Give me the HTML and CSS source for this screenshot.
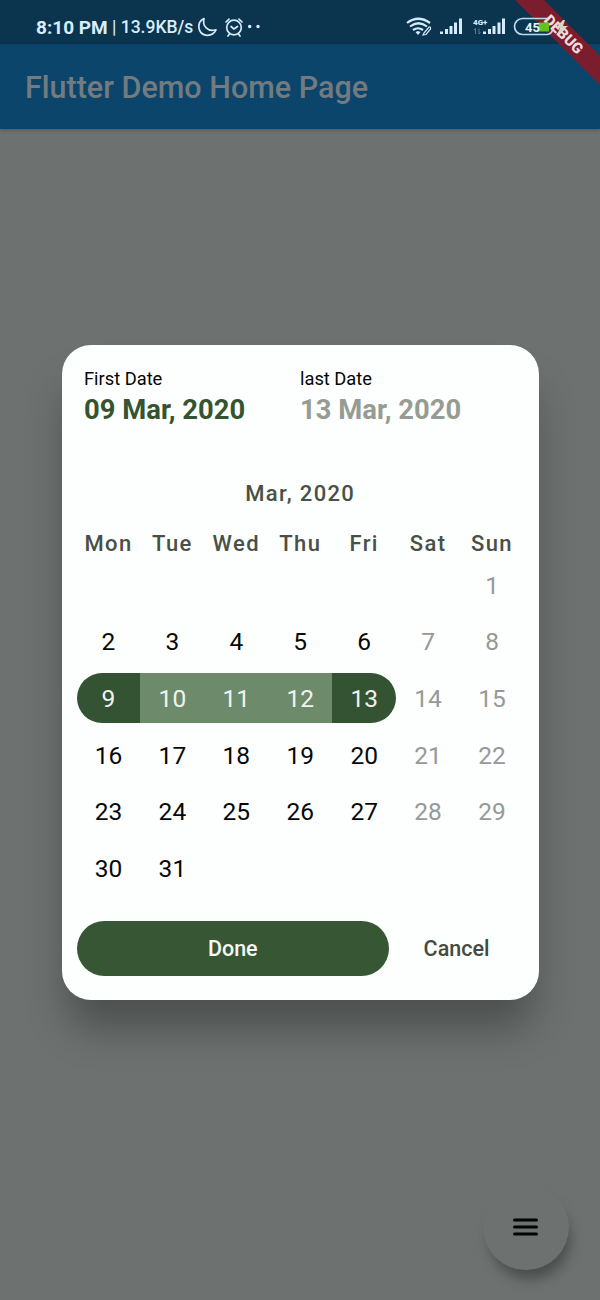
FILE: index.html
```html
<!DOCTYPE html>
<html lang="en">
<head>
<meta charset="utf-8">
<title>Flutter Demo Home Page</title>
<link rel="stylesheet" href="styles.css">
</head>
<body>
<div class="screen">
  <svg class="debug-banner" width="100" height="100" viewBox="0 0 100 100">
    <path d="M15 0H44L100 56V85Z" fill="#7b1d2d"/>
    <text class="debug-text" transform="translate(63.5 34.5) rotate(45)" text-anchor="middle" y="5">DEBUG</text>
  </svg>
  <header class="status-bar">
    <span class="clock">8:10 PM</span><span class="speed">| 13.9KB/s</span>
    <svg class="status-icons" width="70" height="24" viewBox="196 15 70 24" fill="none" stroke="#d5eafa" stroke-width="1.700" stroke-linecap="round" stroke-linejoin="round">
      <path d="M204 18.500C196.500 22 197 34.500 207 35.300C211.500 35.500 215 32.800 216 29.700C208 32.500 202 26 204 18.500Z"/>
      <circle cx="234" cy="27.500" r="7.300"/>
      <path d="M226 22L229 19.200M242 22L239 19.200M231 26.500L234 29L237.500 26.500M229.500 34L228 36M238.500 34L240 36"/>
      <circle cx="249.700" cy="26.500" r=".9" fill="#d5eafa"/><circle cx="258" cy="26.500" r=".9" fill="#d5eafa"/>
    </svg>
    <svg class="device-icons" width="170" height="28" viewBox="402 13 170 28" fill="none" stroke="#d5eafa" stroke-width="2.200">
      <path d="M407 23Q418 14.500 430 23M410 26.500Q418.500 20 427 26.500M413 30Q418 26.500 423 30"/>
      <path d="M415.500 32L418 35L420.500 32L418 31Z" fill="#d5eafa" stroke="none"/>
      <path d="M424 33L429 27Q431 26.500 430.500 29L426 34.500L423 35Z" stroke-width="1.200"/>
      <g fill="#d5eafa" stroke="none">
        <path d="M440 31.500h3V34h-3zM445 29h3v5h-3zM449.500 26h3v8h-3zM454 22.500h3V34h-3zM459 18.500h3V34h-3z"/>
        <path d="M483 31.500h3V34h-3zM488 29h3v5h-3zM492.500 26h3v8h-3zM497.500 22.500h3V34h-3zM502 18.500h3V34h-3z"/>
        <text class="net" x="473" y="24.500">4G+</text>
      </g>
      <path d="M475.500 28.500V34M474 30L475.500 28.500M479 28.500V34M479 34L480.500 32.500" stroke-width=".8" stroke="#6d91ad"/>
      <path d="M539 22.500H549V31.500H538Z" fill="#5fc41c" stroke="none"/>
      <path d="M548 18.500H522.500A8 8 0 0 0 522.500 34.500H547Q552 34 552.500 29" stroke="#bddaed" stroke-width="1.700"/>
      <text class="battery" x="525" y="31.500" fill="#e7f4fb" stroke="none">45</text>
      <path d="M563 20L555.500 28H560L557 35L568 26H563L565 20Z" fill="#d7d7c9" stroke="none"/>
    </svg>
  </header>
  <div class="app-bar"><h1 class="app-title">Flutter Demo Home Page</h1></div>
  <main class="page">
    <section class="dialog">
      <div class="dates">
        <div class="date"><div class="label">First Date</div><div class="value">09 Mar, 2020</div></div>
        <div class="date"><div class="label">last Date</div><div class="value value-muted">13 Mar, 2020</div></div>
      </div>
      <div class="month">Mar, 2020</div>
      <div class="weekdays"><span>Mon</span><span>Tue</span><span>Wed</span><span>Thu</span><span>Fri</span><span>Sat</span><span>Sun</span></div>
      <div class="days">
        <span class="day off first">1</span>
        <span class="day">2</span><span class="day">3</span><span class="day">4</span><span class="day">5</span><span class="day">6</span><span class="day off">7</span><span class="day off">8</span>
        <span class="day edge start">9</span><span class="day between">10</span><span class="day between">11</span><span class="day between">12</span><span class="day edge end">13</span><span class="day off">14</span><span class="day off">15</span>
        <span class="day">16</span><span class="day">17</span><span class="day">18</span><span class="day">19</span><span class="day">20</span><span class="day off">21</span><span class="day off">22</span>
        <span class="day">23</span><span class="day">24</span><span class="day">25</span><span class="day">26</span><span class="day">27</span><span class="day off">28</span><span class="day off">29</span>
        <span class="day">30</span><span class="day">31</span>
      </div>
      <div class="actions"><button class="done">Done</button><button class="cancel">Cancel</button></div>
    </section>
    <button class="fab" aria-label="Menu"><svg width="28" height="20" viewBox="0 0 28 20" stroke="#030504" stroke-width="3" stroke-linecap="round"><path d="M2.500 3H24.500M2.500 10H24.500M2.500 17H24.500"/></svg></button>
  </main>
</div>
</body>
</html>
```
FILE: styles.css
```css
* { box-sizing: border-box; }
body { margin: 0; font-family: Roboto, "Liberation Sans", sans-serif; background: #6d7170; }
button { border: 0; padding: 0; background: none; font: inherit; }
.screen { position: relative; width: 600px; height: 1300px; display: flex; flex-direction: column; overflow: hidden; }
.debug-banner { position: absolute; top: 0; right: 0; z-index: 1; }
.debug-text { font-size: 15px; font-weight: 900; fill: #ecdcdf; }
.status-bar { height: 44px; flex: none; background: #0b344f; display: flex; align-items: center; padding: 10px 28px 0 36px; color: #d9edfb; white-space: nowrap; }
.clock { width: 76px; font-size: 19px; font-weight: 700; }
.speed { width: 84px; font-size: 17.5px; font-weight: 500; }
.status-icons { width: 70px; height: 24px; flex: none; }
.device-icons { position: relative; margin-left: auto; flex: none; z-index: 2; }
.net { font-size: 8px; font-weight: 900; }
.battery { font-size: 13px; font-weight: 700; }
.app-bar { height: 85px; flex: none; background: #0c456b; display: flex; align-items: center; padding-left: 25px; box-shadow: 0 1px 4px rgba(0,0,0,.25); }
.app-title { margin: 2px 0 0; font-size: 30.5px; font-weight: 500; color: #717b80; white-space: nowrap; }
.page { flex: 1; display: flex; flex-direction: column; padding: 216px 31px 30px 61.5px; }
.dialog { width: 477.5px; height: 655px; flex: none; padding: 23px 15px 24px; border-radius: 29px; background: #fcfffe; box-shadow: 0 34px 42px -6px rgba(0,0,0,.3); }
.dates { display: grid; grid-template-columns: 216px 1fr; padding-left: 7.5px; height: 108px; }
.label { font-size: 18.3px; line-height: 22px; color: #050505; }
.value { font-size: 27.4px; line-height: 32px; margin-top: 4px; font-weight: 700; color: #36532f; white-space: nowrap; }
.value-muted { color: #969b93; }
.month { height: 35px; line-height: 35px; text-align: center; font-size: 22px; font-weight: 500; letter-spacing: 1.35px; color: #485047; }
.weekdays { display: grid; grid-template-columns: repeat(7, 1fr); height: 32px; margin-top: 17px; text-align: center; font-size: 22px; line-height: 32px; font-weight: 500; letter-spacing: 1.4px; color: #485047; }
.days { display: grid; grid-template-columns: repeat(7, 1fr); grid-auto-rows: 50px; row-gap: 6.7px; }
.day { display: flex; align-items: center; justify-content: center; font-size: 24.5px; color: #080808; }
.first { grid-column: 7; }
.off { color: #969998; }
.edge { background: #345333; color: #f0f4ee; }
.between { background: #6d8b6a; color: #f0f4ee; }
.start { border-radius: 25px 0 0 25px; }
.end { border-radius: 0 25px 25px 0; }
.actions { display: flex; margin-top: 28px; height: 55px; font-size: 21.5px; font-weight: 500; }
.done { width: 312.5px; border-radius: 27.5px; background: #375634; color: #f5f8f4; }
.cancel { flex: 1; color: #424b42; }
.fab { width: 86px; height: 86px; flex: none; align-self: flex-end; margin-top: auto; border-radius: 50%; background: #6d7170; display: flex; align-items: center; justify-content: center; box-shadow: 4px 12px 13px -3px rgba(0,0,0,.32); }
```
